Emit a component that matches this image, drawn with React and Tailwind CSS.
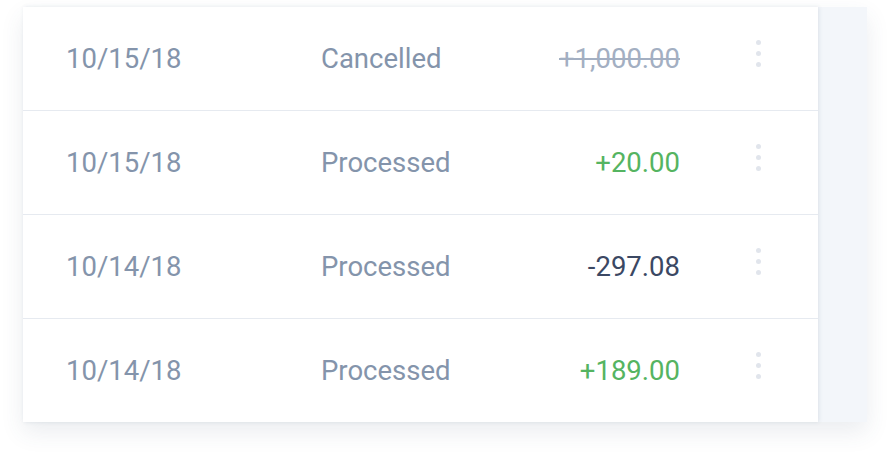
const rows = [
  { date: '10/15/18', status: 'Cancelled', amount: '+1,000.00', kind: 'cancelled' },
  { date: '10/15/18', status: 'Processed', amount: '+20.00', kind: 'credit' },
  { date: '10/14/18', status: 'Processed', amount: '-297.08', kind: 'debit' },
  { date: '10/14/18', status: 'Processed', amount: '+189.00', kind: 'credit' },
];

const amountCls = {
  cancelled: 'text-[#a3afc2] line-through decoration-[1.5px]',
  credit: 'text-[#55b461]',
  debit: 'text-[#3b4863]',
};

function Dots() {
  return (
    <div className="ml-[76px] mb-[10px] flex flex-col gap-[6px]">
      <span className="w-[5px] h-[5px] rounded-full bg-[#e1e5ec]" />
      <span className="w-[5px] h-[5px] rounded-full bg-[#e1e5ec]" />
      <span className="w-[5px] h-[5px] rounded-full bg-[#e1e5ec]" />
    </div>
  );
}

export default function App() {
  return (
    <div
      className="w-[890px] h-[460px] bg-white pt-[7px] pl-[23px]"
      style={{ fontFamily: 'Roboto, "Liberation Sans", sans-serif' }}
    >
      <div className="flex w-[844px] shadow-[0_10px_22px_rgba(60,80,110,0.10)]">
        <div className="relative z-10 w-[795px] bg-white shadow-[1px_0_4px_rgba(60,80,110,0.12)]">
          {rows.map((r, i) => (
            <div
              key={i}
              className={`flex items-center h-[103px] pl-[43px] text-[27.5px] ${i > 0 ? 'border-t border-[#e6eaf0] h-[104px]' : ''}`}
            >
              <div className="w-[255px] text-[#8494ab]">{r.date}</div>
              <div className="w-[200px] text-[#8494ab]">{r.status}</div>
              <div className={`w-[159px] text-right ${amountCls[r.kind]}`}>{r.amount}</div>
              <Dots />
            </div>
          ))}
        </div>
        <div className="flex-1 bg-[#f3f6fa]" />
      </div>
    </div>
  );
}
